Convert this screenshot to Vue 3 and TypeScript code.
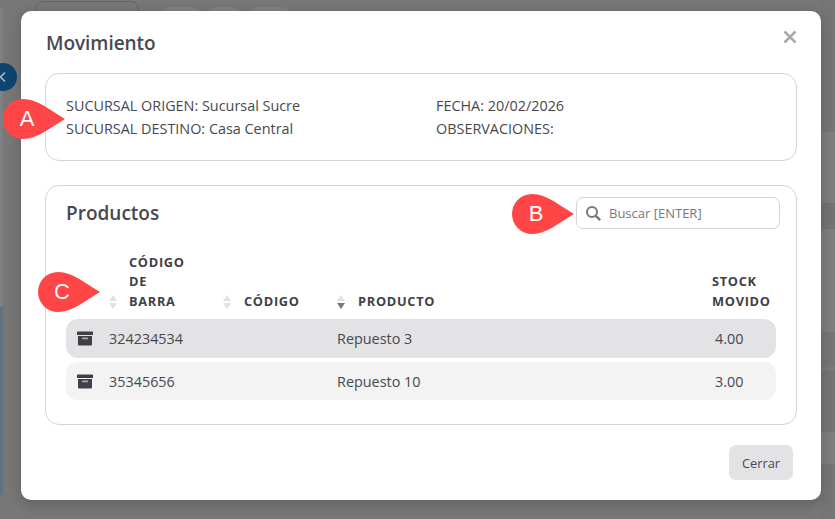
<script setup lang="ts">
interface Row { barcode: string; code: string; product: string; stock: string }
const rows: Row[] = [
  { barcode: '324234534', code: '', product: 'Repuesto 3', stock: '4.00' },
  { barcode: '35345656', code: '', product: 'Repuesto 10', stock: '3.00' },
]
const bands = [
  { h: 132, c: '#757575' }, { h: 71, c: '#7d7d7d' }, { h: 26, c: '#737373' }, { h: 103, c: '#7e7e7e' },
  { h: 35, c: '#767676' }, { h: 4, c: '#7b7b7b' }, { h: 61, c: '#747474' }, { h: 32, c: '#7e7e7e' }, { h: 55, c: '#757575' },
]
</script>

<template>
  <div class="page">
    <div class="bg-top">
      <span class="bg-outline"></span>
      <span class="bg-pill p1"></span>
      <span class="bg-pill p2"></span>
      <span class="bg-pill p3"></span>
    </div>
    <div class="bg-side"><span class="bg-stripe"></span></div>
    <span class="bg-toggle">
      <svg width="10" height="12" viewBox="0 0 10 12"><path d="M7 1.5 2.5 6 7 10.5" fill="none" stroke="#a9b6c2" stroke-width="1.6" /></svg>
    </span>
    <div class="bg-bands"><i v-for="(b, i) in bands" :key="i" :style="{ height: b.h + 'px', background: b.c }"></i></div>

    <section class="modal">
      <header class="modal-head">
        <h2>Movimiento</h2>
        <svg class="close" width="14" height="14" viewBox="0 0 14 14"><path d="M1.5 1.5l11 11M12.5 1.5l-11 11" stroke="#a9aab0" stroke-width="2.6" fill="none" /></svg>
      </header>

      <div class="card info">
        <div>
          <p>SUCURSAL ORIGEN: Sucursal Sucre</p>
          <p>SUCURSAL DESTINO: Casa Central</p>
        </div>
        <div>
          <p>FECHA: 20/02/2026</p>
          <p>OBSERVACIONES:</p>
        </div>
      </div>

      <div class="card products">
        <div class="products-head">
          <h3>Productos</h3>
          <label class="search">
            <svg width="17" height="17" viewBox="0 0 17 17"><circle cx="7" cy="7" r="5" fill="none" stroke="#76777f" stroke-width="2" /><path d="M10.8 10.8l4.4 4.4" stroke="#76777f" stroke-width="2.4" fill="none" /></svg>
            <span>Buscar [ENTER]</span>
          </label>
        </div>

        <div class="grid grid-head">
          <div></div>
          <div class="th">
            <span class="sort"><i class="up"></i><i class="down"></i></span>
            <span class="narrow">CÓDIGO DE BARRA</span>
          </div>
          <div class="th wide-gap">
            <span class="sort"><i class="up"></i><i class="down"></i></span>
            <span>CÓDIGO</span>
          </div>
          <div class="th wide-gap">
            <span class="sort"><i class="up"></i><i class="down active"></i></span>
            <span>PRODUCTO</span>
          </div>
          <div class="th plain"><span class="narrow">STOCK MOVIDO</span></div>
        </div>

        <div v-for="(row, i) in rows" :key="row.barcode" class="grid row" :class="{ selected: i === 0 }">
          <div class="icon">
            <svg width="16" height="15" viewBox="0 0 16 15">
              <rect x="0" y="0.5" width="16" height="3.6" rx="0.6" fill="#3f4048" />
              <path d="M1 5h14v8.6a1 1 0 0 1-1 1H2a1 1 0 0 1-1-1z" fill="#3f4048" />
              <rect x="5" y="6.6" width="6" height="1.7" rx="0.6" fill="#a9aab0" />
            </svg>
          </div>
          <div>{{ row.barcode }}</div>
          <div>{{ row.code }}</div>
          <div>{{ row.product }}</div>
          <div class="stock">{{ row.stock }}</div>
        </div>
      </div>

      <footer class="modal-foot">
        <button type="button">Cerrar</button>
      </footer>
    </section>

    <div class="marker marker-a"><svg width="62" height="40" viewBox="0 0 62 40"><path d="M20 0C35 0 48 12 62 20 48 28 35 40 20 40A20 20 0 0 1 20 0Z" fill="#ff4545" /></svg><span>A</span></div>
    <div class="marker marker-b"><svg width="62" height="40" viewBox="0 0 62 40"><path d="M20 0C35 0 48 12 62 20 48 28 35 40 20 40A20 20 0 0 1 20 0Z" fill="#ff4545" /></svg><span>B</span></div>
    <div class="marker marker-c"><svg width="62" height="40" viewBox="0 0 62 40"><path d="M20 0C35 0 48 12 62 20 48 28 35 40 20 40A20 20 0 0 1 20 0Z" fill="#ff4545" /></svg><span>C</span></div>
  </div>
</template>

<style>
html, body { margin: 0; padding: 0; background: #787878; overflow: hidden; }
</style>

<style scoped>
.page {
  position: relative;
  width: 835px;
  height: 519px;
  overflow: hidden;
  background: #777;
  font-family: "Open Sans", "Liberation Sans", sans-serif;
  color: #47484f;
  font-size: 14.4px;
}
.bg-top { position: absolute; left: 35px; top: 1px; display: flex; align-items: flex-start; }
.bg-outline { width: 102px; height: 40px; border: 1px solid #636363; border-radius: 8px; margin-right: 24px; }
.bg-pill { height: 30px; margin-top: 6px; border-radius: 8px; background: #7f7f7f; }
.p1 { width: 37px; margin-right: 8px; }
.p2 { width: 32px; margin-right: 10px; }
.p3 { width: 40px; }
.bg-side { position: absolute; left: 0; top: 8px; width: 3px; height: 487px; background: #808080; border-top-right-radius: 4px; display: flex; align-items: flex-end; }
.bg-stripe { display: block; width: 3px; height: 188px; background: #5f7180; }
.bg-toggle {
  position: absolute; left: -11px; top: 63px; width: 28px; height: 28px; border-radius: 50%;
  background: #0e4470; display: flex; align-items: center; justify-content: flex-end;
}
.bg-toggle svg { margin-right: 9px; }
.bg-bands { position: absolute; right: 0; top: 0; width: 14px; display: flex; flex-direction: column; }
.bg-bands i { display: block; }

.modal {
  position: absolute;
  left: 21px;
  top: 11px;
  width: 800px;
  height: 489px;
  box-sizing: border-box;
  padding: 0 24px;
  background: #fff;
  border-radius: 10px;
  box-shadow: 0 4px 14px rgba(0, 0, 0, 0.2);
  display: flex;
  flex-direction: column;
}
.modal-head { height: 62px; display: flex; align-items: center; justify-content: space-between; padding: 2px 0 0; box-sizing: border-box; }
.modal-head h2 { margin: 0 0 0 1px; font-size: 19px; font-weight: 600; color: #47484f; letter-spacing: -0.05px; }
.close { margin-right: 0; margin-top: -12px; }

.card { border: 1px solid #d3d3d8; border-radius: 14px; box-sizing: border-box; }
.info { height: 88px; display: grid; grid-template-columns: 370px 1fr; padding: 20px 20px 0; }
.info p { margin: 0; line-height: 23px; }

.products { height: 240px; margin-top: 24px; padding: 11px 20px 0; }
.products-head { display: flex; justify-content: space-between; align-items: center; margin-right: -4px; height: 32px; }
.products-head h3 { margin: 0; font-size: 19px; font-weight: 600; color: #47484f; }
.search {
  width: 204px; height: 32px; box-sizing: border-box; border: 1px solid #d3d3d8; border-radius: 7px;
  display: flex; align-items: center; gap: 7px; padding-left: 8px; color: #76777f; font-size: 13px;
}

.grid { display: grid; grid-template-columns: 43px 114px 114px 375px 64px; width: 710px; }
.grid-head { margin-top: 20px; align-items: end; min-height: 70px; }
.th {
  display: flex; align-items: flex-end; gap: 11px;
  font-size: 12.8px; font-weight: 700; letter-spacing: 0.7px; line-height: 19.5px; color: #3f4048;
  padding-bottom: 8px;
}
.th.wide-gap { gap: 12px; }
.th.plain { display: block; }
.narrow { display: block; max-width: 66px; }
.sort { display: flex; flex-direction: column; gap: 2px; width: 9px; padding-bottom: 2px; flex: none; }
.sort i { display: block; width: 0; height: 0; border-left: 4.5px solid transparent; border-right: 4.5px solid transparent; }
.sort .up { border-bottom: 6px solid #e2e2e5; }
.sort .down { border-top: 6px solid #e2e2e5; }
.sort .down.active { border-top-color: #76777f; }

.row { height: 39px; align-items: center; border-radius: 12px; background: #f3f3f4; margin-bottom: 4px; color: #47484f; }
.row:last-child { height: 38px; padding-top: 1px; box-sizing: border-box; }
.row.selected { background: #e3e3e6; }
.icon { display: flex; padding-left: 11px; }
.stock { padding-left: 3px; }

.modal-foot { display: flex; justify-content: flex-end; padding: 20px 4px 0 0; }
button {
  width: 64px; height: 35px; border: 0; border-radius: 7px; background: #e3e3e6;
  font: inherit; font-size: 12.8px; color: #47484f; padding: 0;
}

.marker { position: absolute; width: 62px; height: 40px; color: #fff; font-family: "Liberation Sans", sans-serif; }
.marker svg { position: absolute; left: 0; top: 0; }
.marker span { position: absolute; left: 0; top: 0; width: 48px; height: 40px; line-height: 40px; text-align: center; font-size: 22px; }
.marker-a { left: 3px; top: 99px; }
.marker-b { left: 512px; top: 194px; }
.marker-c { left: 38px; top: 272px; }
</style>
